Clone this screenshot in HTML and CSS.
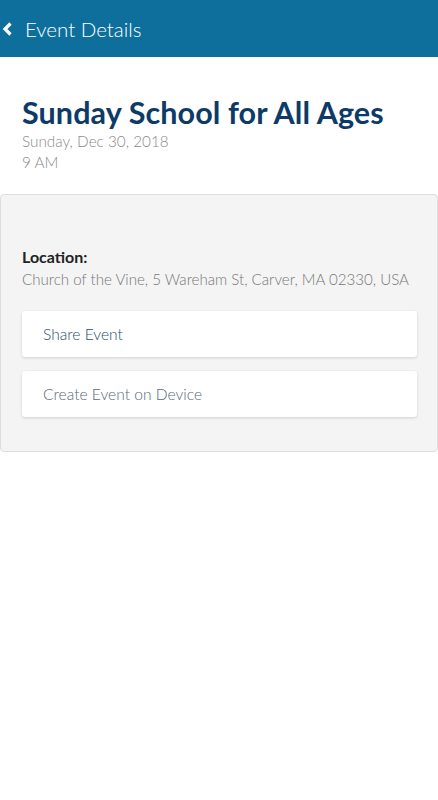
FILE: index.html
```html
<!DOCTYPE html>
<html>
<head>
<meta charset="utf-8">
<link rel="stylesheet" href="styles.css">
</head>
<body>
<header class="topbar">
  <svg class="back" width="12" height="14" viewBox="0 0 12 14"><path d="M9.5 1.5 L4 7 L9.5 12.5" fill="none" stroke="#fff" stroke-width="3.2"/></svg>
  <span class="topbar-title">Event Details</span>
</header>
<section class="intro">
  <h1 class="title">Sunday School for All Ages</h1>
  <div class="meta">Sunday, Dec 30, 2018</div>
  <div class="meta">9 AM</div>
</section>
<section class="card">
  <div class="label">Location:</div>
  <div class="address">Church of the Vine, 5 Wareham St, Carver, MA 02330, USA</div>
  <div class="actions">
    <div class="action share">Share Event</div>
    <div class="action">Create Event on Device</div>
  </div>
</section>
</body>
</html>
```
FILE: styles.css
```css
html, body { margin: 0; padding: 0; background: #fff; }
body { font-family: Lato, "Open Sans", sans-serif; width: 438px; }
.topbar {
  height: 57px;
  background: #0e6f9c;
  display: flex;
  align-items: center;
  padding-left: 1px;
  gap: 12px;
}
.back { display: block; }
.topbar-title { color: #fff; font-size: 20.5px; font-weight: 300; }
.intro { padding: 36px 22px 21px; }
.title { margin: 0; font-size: 30.5px; font-weight: 700; color: #0d3b66; line-height: 38px; letter-spacing: 0.1px; }
.meta { color: #8a8a8a; font-size: 15.3px; font-weight: 300; line-height: 21px; }
.card {
  background: #f4f4f4;
  border: 1px solid #dedede;
  border-radius: 4px;
  padding: 51px 20px 34px 21px;
}
.label { font-size: 16px; font-weight: 700; color: #222; line-height: 21px; }
.address { font-size: 15.1px; font-weight: 300; color: #777; line-height: 22px; margin-top: 1px; white-space: nowrap; }
.actions { display: flex; flex-direction: column; gap: 14px; margin-top: 21px; }
.action {
  background: #fff;
  border-radius: 3px;
  height: 46px;
  display: flex;
  align-items: center;
  padding-left: 21px;
  font-size: 15.6px;
  font-weight: 300;
  color: #5a6a7a;
  box-shadow: 0 1px 3px rgba(0,0,0,0.15);
}
.share { color: #2a4e6e; }
```
